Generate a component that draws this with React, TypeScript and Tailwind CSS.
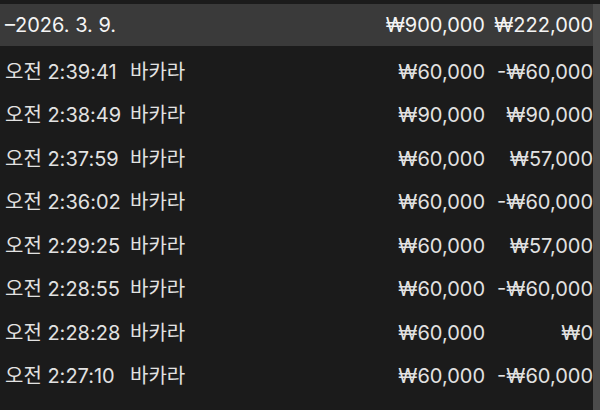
const ROWS = [
  { time: "오전 2:39:41", game: "바카라", bet: "₩60,000", result: "-₩60,000" },
  { time: "오전 2:38:49", game: "바카라", bet: "₩90,000", result: "₩90,000" },
  { time: "오전 2:37:59", game: "바카라", bet: "₩60,000", result: "₩57,000" },
  { time: "오전 2:36:02", game: "바카라", bet: "₩60,000", result: "-₩60,000" },
  { time: "오전 2:29:25", game: "바카라", bet: "₩60,000", result: "₩57,000" },
  { time: "오전 2:28:55", game: "바카라", bet: "₩60,000", result: "-₩60,000" },
  { time: "오전 2:28:28", game: "바카라", bet: "₩60,000", result: "₩0" },
  { time: "오전 2:27:10", game: "바카라", bet: "₩60,000", result: "-₩60,000" },
];

export default function App() {
  return (
    <div
      className="h-[410px] w-[600px] overflow-hidden bg-[#1b1b1b] pt-[4px] text-[20px] text-[#e2e2e2]"
      style={{ fontFamily: "Inter, 'Noto Sans CJK KR', sans-serif" }}
    >
      <div className="flex h-full">
        <div className="flex-1">
          {/* day summary */}
          <div className="flex h-[42px] items-center bg-[#3a3a3a] pl-[5px] text-[#f4f4f4]">
            <span className="flex-1">–2026. 3. 9.</span>
            <span className="text-right">₩900,000</span>
            <span className="w-[108px] text-right">₩222,000</span>
          </div>
          <div className="pt-[4px]">
            {ROWS.map((row) => (
              <div key={row.time} className="flex h-[43.5px] items-center pl-[5px]">
                <span className="w-[125px]">{row.time}</span>
                <span className="flex-1">{row.game}</span>
                <span className="text-right">{row.bet}</span>
                <span className="w-[108px] text-right">{row.result}</span>
              </div>
            ))}
          </div>
        </div>
        <div className="w-[7px] bg-[#4b4b4b]" />
      </div>
    </div>
  );
}
